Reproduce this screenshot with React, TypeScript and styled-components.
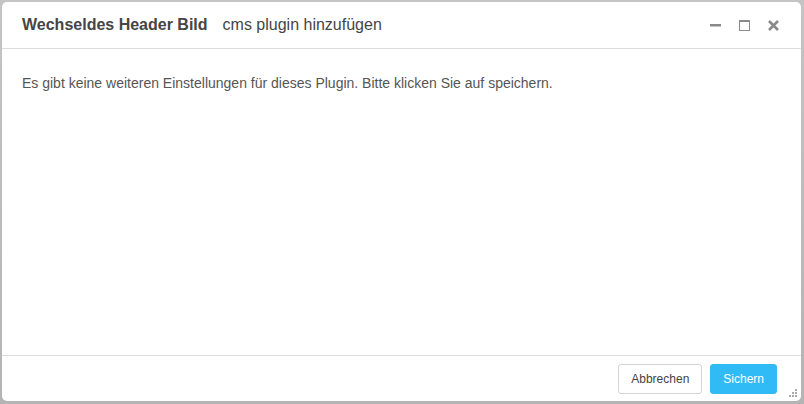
import styled, { createGlobalStyle } from 'styled-components';

const GlobalStyle = createGlobalStyle`
  html, body {
    margin: 0;
    padding: 0;
    background: #b9b9b9;
  }
  body {
    font-family: 'Liberation Sans', Arial, Helvetica, sans-serif;
  }
`;

const Page = styled.div`
  width: 804px;
  height: 404px;
  padding: 2px 3px 3px 2px;
  box-sizing: border-box;
  background: linear-gradient(#c4c4c4, #b4b4b4);
`;

const Dialog = styled.div`
  height: 100%;
  background: #fff;
  border-radius: 5px;
  display: flex;
  flex-direction: column;
  position: relative;
  overflow: hidden;
`;

const Header = styled.div`
  height: 46px;
  border-bottom: 1px solid #dddddd;
  display: flex;
  align-items: center;
  padding: 0 20px;
  flex-shrink: 0;
`;

const Title = styled.h1`
  margin: 0;
  font-size: 16px;
  font-weight: bold;
  color: #454545;
`;

const Subtitle = styled.span`
  margin-left: 15px;
  font-size: 16px;
  color: #454545;
`;

const Controls = styled.div`
  margin-left: auto;
  display: flex;
  align-items: center;
  gap: 16px;
  padding-right: 1px;
`;

const ControlIcon = styled.svg`
  width: 13px;
  height: 13px;
  display: block;
`;

const Body = styled.div`
  flex: 1;
  padding: 26px 20px;
  font-size: 14px;
  color: #555;
`;

const Footer = styled.div`
  height: 45px;
  border-top: 1px solid #dddddd;
  display: flex;
  align-items: center;
  justify-content: flex-end;
  gap: 8px;
  padding: 0 24px 0 0;
  flex-shrink: 0;
`;

const Button = styled.button<{ $primary?: boolean }>`
  height: 30px;
  padding: 0 12px;
  font-family: inherit;
  font-size: 12px;
  border-radius: 3px;
  cursor: pointer;
  border: 1px solid ${(p) => (p.$primary ? '#30bbf7' : '#d4d4d4')};
  background: ${(p) => (p.$primary ? '#30bbf7' : '#fff')};
  color: ${(p) => (p.$primary ? '#fff' : '#444')};
`;

const Grip = styled.svg`
  position: absolute;
  right: 3px;
  bottom: 3px;
  width: 10px;
  height: 10px;
`;

const App = () => {
  return (
    <>
      <GlobalStyle />
      <Page>
        <Dialog>
          <Header>
            <Title>Wechseldes Header Bild</Title>
            <Subtitle>cms plugin hinzufügen</Subtitle>
            <Controls>
              <ControlIcon viewBox='0 0 13 13'>
                <rect x='1' y='5' width='11' height='2.5' fill='#8a8a8a' />
              </ControlIcon>
              <ControlIcon viewBox='0 0 13 13'>
                <rect x='1.5' y='1.5' width='10' height='10' fill='none' stroke='#8a8a8a' strokeWidth='1' />
                <rect x='1' y='1' width='11' height='2' fill='#8a8a8a' />
              </ControlIcon>
              <ControlIcon viewBox='0 0 13 13'>
                <path d='M2 2 L11 11 M11 2 L2 11' stroke='#8a8a8a' strokeWidth='2.6' />
              </ControlIcon>
            </Controls>
          </Header>
          <Body>
            Es gibt keine weiteren Einstellungen für dieses Plugin. Bitte klicken Sie auf speichern.
          </Body>
          <Footer>
            <Button>Abbrechen</Button>
            <Button $primary>Sichern</Button>
          </Footer>
          <Grip viewBox='0 0 10 10'>
            <rect x='7' y='1' width='2' height='2' fill='#aaa' />
            <rect x='4' y='4' width='2' height='2' fill='#aaa' />
            <rect x='7' y='4' width='2' height='2' fill='#aaa' />
            <rect x='1' y='7' width='2' height='2' fill='#aaa' />
            <rect x='4' y='7' width='2' height='2' fill='#aaa' />
            <rect x='7' y='7' width='2' height='2' fill='#aaa' />
          </Grip>
        </Dialog>
      </Page>
    </>
  );
};

export default App;
